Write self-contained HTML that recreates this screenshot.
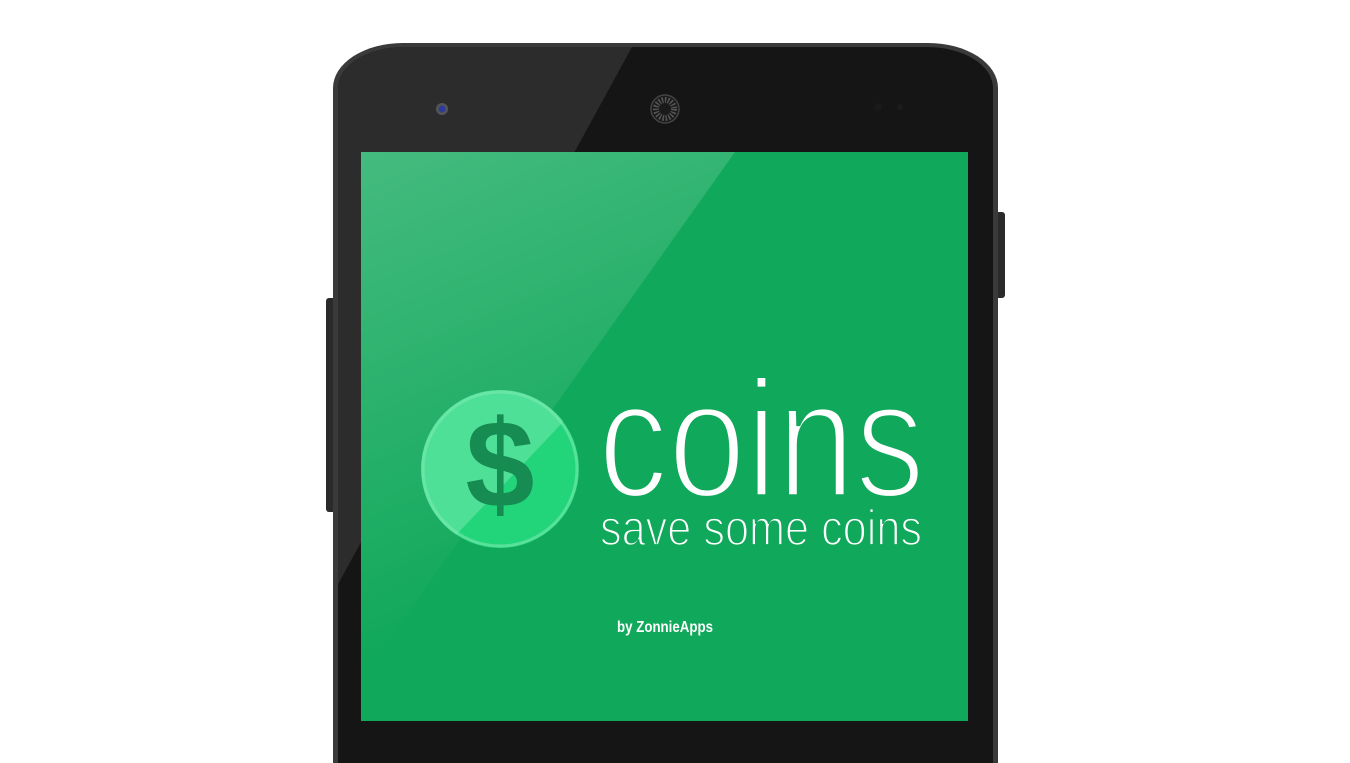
<!DOCTYPE html>
<html><head><meta charset="utf-8"><style>
body{margin:0;width:1350px;height:721px;background:#fff;position:relative;overflow:hidden;font-family:"Liberation Sans",sans-serif}
.btnl{position:absolute;left:326px;top:298px;width:9px;height:214px;background:#2a2a2a;border-radius:3px 0 0 3px}
.btnr{position:absolute;left:996px;top:212px;width:9px;height:86px;background:#2a2a2a;border-radius:0 3px 3px 0}
.phone{position:absolute;left:333px;top:43px;width:665px;height:720px;background:#3a3a3a;border-radius:70px 70px 0 0 / 45px 45px 0 0}
.inner{position:absolute;left:5px;top:4px;right:5px;bottom:0;background:#151515;border-radius:66px 66px 0 0/41px 41px 0 0;overflow:hidden}
.screen{position:absolute;left:361px;top:152px;width:607px;height:569px;background:#10a85a;overflow:hidden}
</style></head><body>
<div class="btnl"></div><div class="btnr"></div>
<div class="phone"><div class="inner">
<svg width="655" height="720" style="position:absolute;left:0;top:0">
<polygon points="0,0 294,0 -100,720 0,720" fill="#2c2c2c"/>
<circle cx="104" cy="62" r="6" fill="#555"/><circle cx="104" cy="62" r="3.5" fill="#2c3a9a"/>
<circle cx="327" cy="62" r="14" fill="#1a1a1a" stroke="#444" stroke-width="1.5"/>
<circle cx="327" cy="62" r="9" fill="none" stroke="#555" stroke-dasharray="1.5 1.5" stroke-width="6"/>
<circle cx="540" cy="60" r="4" fill="#1a1a1a"/><circle cx="562" cy="60" r="3" fill="#1c1c1c"/>
</svg>
</div></div>
<div class="screen">
<svg width="607" height="569" style="position:absolute;left:0;top:0">
<defs><linearGradient id="g" x1="0" y1="0" x2="0.3" y2="1"><stop offset="0" stop-color="#fff" stop-opacity="0.22"/><stop offset="0.9" stop-color="#fff" stop-opacity="0"/></linearGradient></defs>
<polygon points="0,0 374,0 0,527" fill="url(#g)"/>
<circle cx="139" cy="317" r="79" fill="#22d57a"/>
<clipPath id="c"><circle cx="139" cy="317" r="79"/></clipPath>
<polygon points="-20,250 240,230 60,420 -20,420" fill="#4fe097" clip-path="url(#c)"/>
<circle cx="139" cy="317" r="77" fill="none" stroke="#7ce9b1" stroke-width="3" opacity="0.6"/>
<text x="139" y="355" text-anchor="middle" font-family="Liberation Sans" font-weight="bold" font-size="124" fill="#178c52">$</text>
<g font-family="Liberation Sans" fill="#fff" stroke="#10a85a">
<text x="237" y="345" font-size="168" stroke-width="5.5" textLength="327" lengthAdjust="spacingAndGlyphs">coins</text>
<text x="239" y="393" font-size="50" stroke-width="1.8" textLength="322" lengthAdjust="spacingAndGlyphs">save some coins</text>
</g>
<text x="256" y="480" font-family="Liberation Sans" font-weight="bold" font-size="16" fill="#fff" textLength="96" lengthAdjust="spacingAndGlyphs">by ZonnieApps</text>
</svg>
</div>
</body></html>
